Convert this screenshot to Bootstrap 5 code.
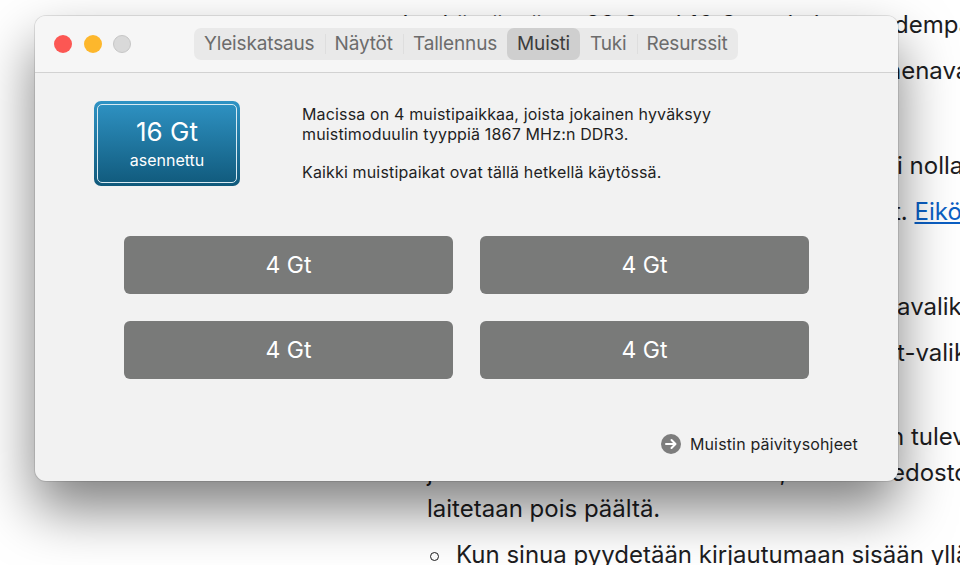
<!DOCTYPE html>
<html lang="fi">
<head>
    <meta charset="UTF-8">
    <meta name="viewport" content="width=device-width, initial-scale=1.0">
    <title>Muisti</title>
    <link href="https://cdn.jsdelivr.net/npm/bootstrap@5.3.1/dist/css/bootstrap.min.css" rel="stylesheet">
    <style>
        html, body {
            height: 565px;
            overflow: hidden;
        }
        body {
            font-family: Inter, "Liberation Sans", sans-serif;
            background-color: #fff;
            position: relative;
        }
        /* article behind the window */
        .article {
            padding-top: 7px;
            font-size: 24px;
            line-height: 36px;
            color: #1d1d1f;
            white-space: nowrap;
        }
        .article p {
            margin: 0 0 10px;
        }
        .article a {
            color: #0b5fc4;
        }
        .article .step-gap {
            margin-bottom: 59px;
        }
        .article .step-gap-sm {
            margin-bottom: 48px;
        }
        .article .tight {
            margin-bottom: 0;
        }
        .from-edge {
            padding-left: 897px;
        }
        .from-edge.nudge-sm {
            padding-left: 893px;
        }
        .from-edge.nudge-lg {
            padding-left: 890px;
        }
        .from-edge.nudge-xl {
            padding-left: 887px;
        }
        .from-first {
            padding-left: 395px;
        }
        .from-list {
            padding-left: 427px;
        }
        .first-left {
            width: 499px;
            flex-shrink: 0;
        }
        .list-left {
            width: 464px;
            flex-shrink: 0;
        }
        .bullet-line {
            padding-left: 456px;
            position: relative;
        }
        .bullet-line::before {
            content: "";
            position: absolute;
            left: 430px;
            top: 15px;
            width: 9px;
            height: 9px;
            border: 1.5px solid #1d1d1f;
            border-radius: 50%;
        }
        /* the About this Mac window */
        .mac-window {
            position: absolute;
            left: 35px;
            top: 16px;
            width: 863px;
            height: 465px;
            background-color: #f2f2f2;
            border-radius: 11px;
            box-shadow: 0 0 0 1px rgba(0, 0, 0, .1), 0 28px 55px rgba(0, 0, 0, .5);
            overflow: hidden;
        }
        .title-bar {
            height: 57px;
            padding-left: 19px;
            background-color: #f6f6f6;
            border-bottom: 1px solid #d2d2d2;
        }
        .light {
            width: 18px;
            height: 18px;
            border-radius: 50%;
        }
        .light-red { background-color: #fc5753; }
        .light-yellow { background-color: #fdb72c; }
        .light-off {
            background-color: #d9d9d9;
            border: 1px solid #c6c6c6;
        }
        .lights {
            gap: 11.5px;
        }
        .tab-bar {
            margin-left: 63px;
            height: 32px;
            background-color: #e9e9e9;
            border-radius: 7px;
            font-size: 19px;
            letter-spacing: -.15px;
        }
        .tab-item {
            padding: 0 10px;
            line-height: 32px;
            color: #6c6c6c;
            position: relative;
        }
        .tab-item + .tab-item::before {
            content: "";
            position: absolute;
            left: 0;
            top: 6px;
            bottom: 6px;
            border-left: 1px solid #dedede;
        }
        .tab-item.current {
            background-color: #cfcfcf;
            color: #3c3c3c;
            border-radius: 7px;
        }
        .tab-item.current::before,
        .tab-item.current + .tab-item::before {
            display: none;
        }
        .memory-top {
            padding: 28px 0 0 59px;
            gap: 62px;
        }
        .capsule {
            width: 146px;
            height: 85px;
            padding: 3px;
            border-radius: 7px;
            background: linear-gradient(#2f93c4, #10597b);
            color: #fff;
            flex-shrink: 0;
        }
        .capsule-inner {
            border: 1.5px solid #d8eaf2;
            border-radius: 5px;
            padding-top: 1px;
        }
        .capsule-size {
            font-size: 26px;
            line-height: 32px;
        }
        .capsule-label {
            font-size: 16px;
            line-height: 24px;
        }
        .memory-text {
            font-size: 16px;
            letter-spacing: .15px;
            line-height: 20px;
            color: #1f1f1f;
            padding-top: 3px;
        }
        .memory-text p {
            margin: 0 0 18px;
        }
        .slot-grid {
            display: grid;
            grid-template-columns: 329px 329px;
            grid-auto-rows: 58px;
            gap: 27px;
            margin: 36px 0 0 89px;
        }
        .slot-box {
            background-color: #797a79;
            border-radius: 6px;
            color: #fff;
            font-size: 23px;
            padding-top: 1px;
        }
        .help-link {
            margin: 53px 40px 0 0;
            gap: 9px;
            font-size: 16px;
            letter-spacing: .15px;
            color: #1f1f1f;
        }
    </style>
</head>
<body>
    <div class="article">
        <p class="d-flex from-first"><span class="first-left">Jos käytössä on 32 Gt tai 16 Gt muistia</span><span>dempaa</span></p>
        <p class="from-edge nudge-xl step-gap">henavalikosta</p>
        <p class="from-edge">i nollaa</p>
        <p class="from-edge nudge-sm step-gap">t. <a href="#">Eikö</a></p>
        <p class="from-edge">avalikko</p>
        <p class="from-edge step-gap-sm">t-valikko</p>
        <p class="from-edge nudge-lg tight">n tulevat</p>
        <p class="d-flex from-list tight"><span class="list-left">ja sen kanssa on hidasta toimia,</span><span>edostot</span></p>
        <p class="from-list">laitetaan pois päältä.</p>
        <p class="bullet-line">Kun sinua pyydetään kirjautumaan sisään yllä</p>
    </div>

    <div class="mac-window">
        <div class="title-bar d-flex align-items-center">
            <div class="lights d-flex">
                <div class="light light-red"></div>
                <div class="light light-yellow"></div>
                <div class="light light-off"></div>
            </div>
            <div class="tab-bar d-flex">
                <div class="tab-item">Yleiskatsaus</div>
                <div class="tab-item">Näytöt</div>
                <div class="tab-item">Tallennus</div>
                <div class="tab-item current">Muisti</div>
                <div class="tab-item">Tuki</div>
                <div class="tab-item">Resurssit</div>
            </div>
        </div>

        <div class="memory-top d-flex">
            <div class="capsule">
                <div class="capsule-inner h-100 d-flex flex-column align-items-center justify-content-center">
                    <div class="capsule-size">16 Gt</div>
                    <div class="capsule-label">asennettu</div>
                </div>
            </div>
            <div class="memory-text">
                <p>Macissa on 4 muistipaikkaa, joista jokainen hyväksyy<br>muistimoduulin tyyppiä 1867 MHz:n DDR3.</p>
                <p>Kaikki muistipaikat ovat tällä hetkellä käytössä.</p>
            </div>
        </div>

        <div class="slot-grid">
            <div class="slot-box d-flex align-items-center justify-content-center">4 Gt</div>
            <div class="slot-box d-flex align-items-center justify-content-center">4 Gt</div>
            <div class="slot-box d-flex align-items-center justify-content-center">4 Gt</div>
            <div class="slot-box d-flex align-items-center justify-content-center">4 Gt</div>
        </div>

        <div class="help-link d-flex align-items-center justify-content-end">
            <svg width="20" height="20" viewBox="0 0 20 20">
                <circle cx="10" cy="10" r="10" fill="#7d7d7d"/>
                <path d="M5 10h9M10.5 6l4 4-4 4" fill="none" stroke="#fff" stroke-width="2" stroke-linecap="round" stroke-linejoin="round"/>
            </svg>
            <span>Muistin päivitysohjeet</span>
        </div>
    </div>

    <script src="https://cdn.jsdelivr.net/npm/bootstrap@5.3.1/dist/js/bootstrap.bundle.min.js"></script>
</body>
</html>
